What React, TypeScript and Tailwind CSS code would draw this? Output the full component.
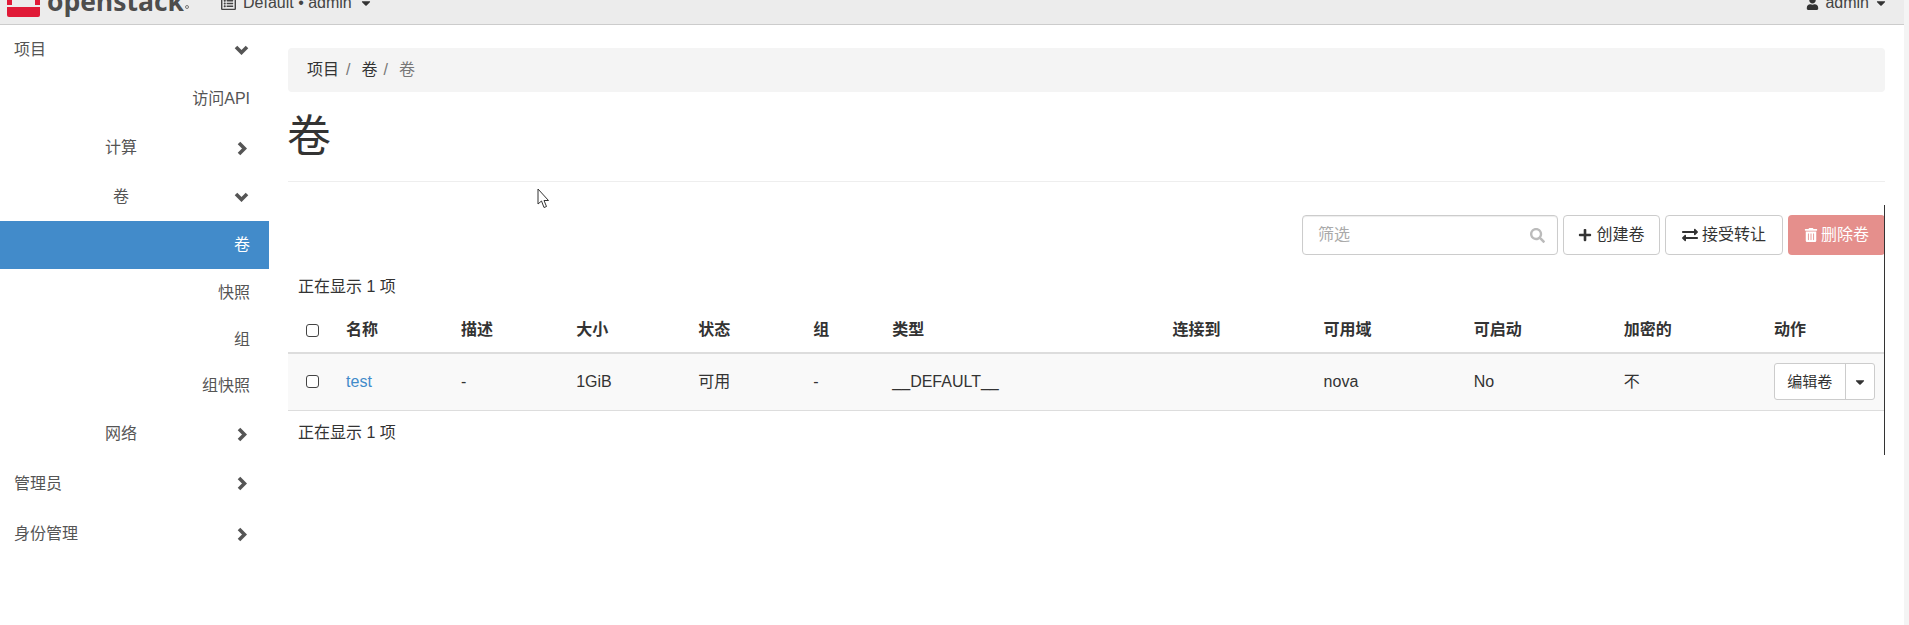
import { FaPlus, FaExchangeAlt, FaTrashAlt, FaSearch, FaCaretDown, FaUser, FaRegListAlt } from "react-icons/fa";

const font = "[font-family:'Liberation_Sans','Noto_Sans_CJK_SC',sans-serif]";

function Chev({ open }: { open?: boolean }) {
  return open ? (
    <svg width="15" height="10" viewBox="0 0 15 10" className="shrink-0 text-[#555]">
      <polyline points="2,2 7.5,7.5 13,2" fill="none" stroke="currentColor" strokeWidth="3.6" />
    </svg>
  ) : (
    <svg width="10" height="15" viewBox="0 0 10 15" className="mr-[2px] shrink-0 text-[#555]">
      <polyline points="2,2 7.5,7.5 2,13" fill="none" stroke="currentColor" strokeWidth="3.6" />
    </svg>
  );
}

function Sidebar() {
  return (
    <aside className="w-[269px] shrink-0 text-[16px] text-[#555]">
      <div className="flex h-[50px] items-center justify-between pl-[14px] pr-[20px]"><span>项目</span><Chev open /></div>
      <div className="flex h-[48px] items-center justify-end pr-[19px]">访问API</div>
      <div className="flex h-[50px] items-center justify-between pl-[105px] pr-[20px]"><span>计算</span><Chev /></div>
      <div className="flex h-[48px] items-center justify-between pl-[113px] pr-[20px]"><span>卷</span><Chev open /></div>
      <div className="flex h-[48px] items-center justify-end bg-[#428bca] pr-[19px] text-white">卷</div>
      <div className="flex h-[48px] items-center justify-end pr-[19px]">快照</div>
      <div className="flex h-[45px] items-center justify-end pr-[19px]">组</div>
      <div className="flex h-[47px] items-center justify-end pr-[19px]">组快照</div>
      <div className="flex h-[50px] items-center justify-between pl-[105px] pr-[20px]"><span>网络</span><Chev /></div>
      <div className="flex h-[49px] items-center justify-between pl-[14px] pr-[20px]"><span>管理员</span><Chev /></div>
      <div className="flex h-[52px] items-center justify-between pl-[14px] pr-[20px]"><span>身份管理</span><Chev /></div>
    </aside>
  );
}

function Box() {
  return <span className="block h-[13px] w-[13px] rounded-[3px] border border-[#444] bg-white" />;
}

const heads = ["名称", "描述", "大小", "状态", "组", "类型", "连接到", "可用域", "可启动", "加密的", "动作"];
const widths = ["w-[50px]", "w-[115px]", "w-[115px]", "w-[122px]", "w-[115px]", "w-[79px]", "w-[280px]", "w-[151px]", "w-[150px]", "w-[150px]", "w-[150px]", "w-[119px]"];

export default function App() {
  return (
    <div className={`relative h-[625px] w-[1909px] overflow-hidden bg-white text-[#333] ${font}`}>
      <header className="flex h-[25px] items-end justify-between overflow-hidden border-b border-[#ccc] bg-[#ececec] pr-[21px]">
        <div className="flex h-[24px] items-end">
          <svg width="33" height="17" viewBox="0 0 33 17" className="mb-[7px] ml-[7px] shrink-0">
            <path d="M0 0H5V5H0ZM28 0H33V5H28Z" fill="#e01a37" />
            <path d="M0 7H33V15a2 2 0 0 1-2 2H2a2 2 0 0 1-2-2Z" fill="#e01a37" />
          </svg>
          <span className="mb-[8px] ml-[7px] text-[26.5px] leading-[30px] font-bold text-[#4d4d4d] [font-family:'Open_Sans',sans-serif]">openstack</span>
          <span className="mb-[15px] ml-[1px] h-[4px] w-[4px] rounded-full border border-[#777]" />
          <span className="mb-[11px] ml-[32px] flex items-center text-[16px] leading-[20px] text-[#444]">
            <FaRegListAlt size={15} className="mr-[7px] text-[#444]" />
            Default • admin
            <FaCaretDown size={14} className="ml-[7px] text-[#333]" />
          </span>
        </div>
        <span className="mb-[11px] flex items-center text-[16px] leading-[20px] text-[#444]">
          <FaUser size={13} className="mr-[6px] text-[#333]" />
          admin
          <FaCaretDown size={14} className="ml-[5px] text-[#333]" />
        </span>
      </header>
      <div className="flex">
        <Sidebar />
        <main className="ml-[19px] w-[1597px] pt-[23px]">
          <div className="flex h-[44px] items-center rounded-[4px] bg-[#f4f4f4] pl-[19px] text-[16px]">
            <span>项目</span><span className="ml-[7px] text-[#777]">/</span>
            <span className="ml-[11px]">卷</span><span className="ml-[6px] text-[#777]">/</span>
            <span className="ml-[11px] text-[#777]">卷</span>
          </div>
          <h1 className="mt-[18px] border-b border-[#eee] pb-[17px] indent-[-1px] text-[44px] leading-[54px] font-normal">卷</h1>
          <div className="mt-[33px] flex h-[40px] items-center justify-end gap-[5px]">
            <div className="flex h-[40px] w-[256px] items-center justify-between rounded-[4px] border border-[#ccc] pl-[15px] pr-[12px] text-[16px] text-[#aaa] shadow-[inset_0_1px_1px_rgba(0,0,0,0.075)]">
              <span>筛选</span><FaSearch size={15} className="text-[#bbb]" />
            </div>
            <button className="flex h-[40px] w-[97px] items-center justify-center gap-[4px] rounded-[4px] border border-[#ccc] bg-white text-[16px]"><FaPlus size={14} />创建卷</button>
            <button className="flex h-[40px] w-[118px] items-center justify-center gap-[4px] rounded-[4px] border border-[#ccc] bg-white text-[16px]"><FaExchangeAlt size={16} />接受转让</button>
            <button className="flex h-[40px] w-[97px] items-center justify-center gap-[3px] rounded-[4px] bg-[#e58f8c] text-[16px] text-white"><FaTrashAlt size={14} />删除卷</button>
          </div>
          <div className="mt-[22px] pl-[10px] text-[16px] leading-[20px]">正在显示 1 项</div>
          <table className="mt-[11px] w-full table-fixed border-collapse text-[16px]">
            <colgroup>{widths.map((w, i) => <col key={i} className={w} />)}</colgroup>
            <thead>
              <tr className="h-[45px] border-b-2 border-[#ddd]">
                <th className="pl-[18px] text-left font-normal"><Box /></th>
                {heads.map((h) => <th key={h} className="pl-[8px] text-left font-bold">{h}</th>)}
              </tr>
            </thead>
            <tbody>
              <tr className="h-[57px] border-b border-[#ddd] bg-[#f9f9f9]">
                <td className="pl-[18px]"><Box /></td>
                <td className="pl-[8px] text-[#428bca]">test</td>
                <td className="pl-[8px]">-</td>
                <td className="pl-[8px]">1GiB</td>
                <td className="pl-[8px]">可用</td>
                <td className="pl-[8px]">-</td>
                <td className="pl-[8px]">__DEFAULT__</td>
                <td className="pl-[8px]"></td>
                <td className="pl-[8px]">nova</td>
                <td className="pl-[8px]">No</td>
                <td className="pl-[8px]">不</td>
                <td className="pl-[8px]">
                  <div className="flex h-[37px] w-[101px] rounded-[3px] border border-[#ccc] bg-white text-[15px]">
                    <span className="flex w-[71px] items-center justify-center border-r border-[#ccc]">编辑卷</span>
                    <span className="flex flex-1 items-center justify-center"><FaCaretDown size={14} /></span>
                  </div>
                </td>
              </tr>
            </tbody>
          </table>
          <div className="mt-[12px] pl-[10px] text-[16px] leading-[20px]">正在显示 1 项</div>
        </main>
      </div>
      <div className="absolute left-[1884px] top-[205px] h-[250px] w-px bg-[#333]" />
      <div className="absolute right-0 top-0 h-full w-[5px] bg-[#f4f4f4]" />
      <svg className="absolute left-[537px] top-[188px]" width="13" height="21" viewBox="0 0 13 21">
        <path d="M1 1V16L4.5 13L7 19.5L9.5 18.5L7 12.5H11.5Z" fill="#fff" stroke="#333" strokeWidth="1" />
      </svg>
    </div>
  );
}
